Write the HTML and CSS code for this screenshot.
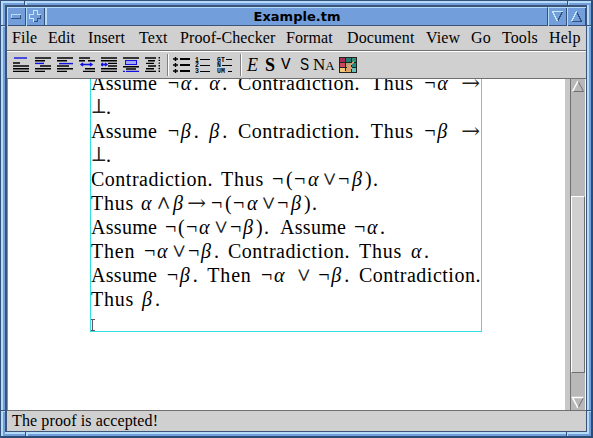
FILE: index.html
```html
<!DOCTYPE html>
<html lang="en">
<head>
<meta charset="utf-8">
<title>Example.tm</title>
<link rel="stylesheet" href="styles.css">
</head>
<body>
<div class="window">
  <header class="titlebar">
    <svg class="wbtn" viewBox="0 0 19 19"><path class="hi" d="M0 19V0H19V1H1V19z"/><path class="lo" d="M18 1H19V19H1V18H18z"/><path class="hi" d="M4 11V7H14V8H5V11z"/><path class="lo" d="M14 8V12H4V11H13V8z"/></svg>
    <svg class="wbtn" viewBox="0 0 19 19"><path class="hi" d="M0 19V0H19V1H1V19z"/><path class="lo" d="M18 1H19V19H1V18H18z"/><path class="dk" d="M7.5 14.5H11.5V11.5H14.5V7.5H11.5V3.5"/><path class="lt" d="M7.5 14.5V11.5H3.5V7.5H7.5V3.5H11.5V7.5H14.5"/></svg>
    <h1 class="title">Example.tm</h1>
    <svg class="wbtn" viewBox="0 0 19 19"><path class="hi" d="M0 19V0H19V1H1V19z"/><path class="lo" d="M18 1H19V19H1V18H18z"/><path class="dk" d="M14.5 4.5L9.5 14.5"/><path class="lt" d="M9.5 14.5L4.5 4.5H14.5"/></svg>
    <svg class="wbtn" viewBox="0 0 19 19"><path class="hi" d="M0 19V0H19V1H1V19z"/><path class="lo" d="M18 1H19V19H1V18H18z"/><path class="dk" d="M9.5 4.5L14.5 14.5H4.5"/><path class="lt" d="M4.5 14.5L9.5 4.5"/></svg>
  </header>
  <nav class="menu">
    <span>File</span><span>Edit</span><span>Insert</span><span>Text</span><span>Proof-Checker</span><span>Format</span><span>Document</span><span>View</span><span>Go</span><span>Tools</span><span>Help</span>
  </nav>
  <div class="toolbar">
    <svg class="ico" viewBox="0 0 16 16"><path class="b" d="M1 1H14"/><path class="k" d="M0 6H7M0 9H16M0 11.7H16M0 14.4H16"/></svg>
    <svg class="ico" viewBox="0 0 16 16"><path class="b" d="M0 6.4H9"/><path class="k" d="M0 1H16M0 3.7H10M5 9H16M0 11.7H16M0 14.4H10"/></svg>
    <svg class="ico" viewBox="0 0 16 16"><path class="b" d="M2 6.6H16"/><path class="k" d="M0 1H16M0 3.7H10M0 9H12M0 11.7H16M0 14.4H10"/></svg>
    <svg class="ico" viewBox="0 0 16 16"><path class="b" d="M2 7.5H13M4 6L2 7.5L4 9M11 6L13 7.5L11 9"/><path class="k" d="M0 1H11M0 3.7H6M9 3.7H16M6 11.7H16M4 14.4H16"/></svg>
    <svg class="ico" viewBox="0 0 16 16"><path class="b" d="M0 7.5H6M2 6L0 7.5L2 9M4 6L6 7.5L4 9"/><path class="k" d="M0 1H16M0 3.7H16M7 6.4H16M7 9H16M0 11.7H16M0 14.4H16"/></svg>
    <svg class="ico" viewBox="0 0 16 16"><rect class="box" x="2.5" y="3.5" width="11" height="4"/><path class="b" d="M0 14.4H2M3 14.4H16"/><path class="k" d="M0 1H16M0 9.7H16M3 12H13"/></svg>
    <svg class="ico" viewBox="0 0 16 16"><path class="k" d="M0 1H11M3 3.7H10M1 6.4H9M3 9H11M1 11.7H9M0 14.4H11"/><path class="dots" d="M14.3 0V16"/></svg>
    <i class="sep"></i>
    <svg class="ico list" viewBox="0 0 17 16"><path class="k" d="M0 2H5M2.5 0V4M0 8H5M2.5 6V10M0 14H5M2.5 12V16"/><path class="w" d="M7 2H17M7 8H17M7 14H17"/></svg>
    <svg class="ico nums" viewBox="0 0 17 16"><path class="t" d="M5 2.5H15M5 8.5H15M5 14.5H15"/><text x="0" y="4.5">1</text><text x="0" y="10">2</text><text x="0" y="15.5">3</text></svg>
    <svg class="ico desc" viewBox="0 0 17 16"><path class="t" d="M9 2.5H15M5 8.5H15M11 14.5H15"/><text x="0" y="4.5">GT</text><text x="0" y="10">N</text><text x="0" y="15.5">UM</text></svg>
    <i class="sep sep2"></i>
    <span class="f em">E</span><span class="f st">S</span><span class="f vb">V</span><span class="f sf">S</span><span class="f na">N<small>A</small></span>
    <svg class="pal" viewBox="0 0 18 16"><path fill="#222" d="M0 0H18V16H0z"/><path fill="#a52c50" d="M1 1H6V5H1z"/><path fill="#217d73" d="M7 1H12V5H7z"/><path fill="#348d75" d="M13 1H17V5H13z"/><path fill="#c9485b" d="M1 6H6V10H1z"/><path fill="#a7a77c" d="M7 6H12V10H7z"/><path fill="#218a82" d="M13 6H17V10H13z"/><path fill="#f0c878" d="M1 11H6V15H1z"/><path fill="#e2b450" d="M7 11H12V15H7z"/><path fill="#69bfc0" d="M13 11H17V15H13z"/><path fill="#dc9e70" d="M14 4L15 5L12 8L13 11L10 14L6 15L8 11L7 9L10 8z"/></svg>
  </div>
  <div class="work">
    <main class="page">
      <div class="doc">
        <p class="full"><span class="as">Assume</span><span class="m"><i class="n">¬</i><i class="g">α</i><b>.</b></span><span class="m"><i class="g">α</i><b>.</b></span><span class="co">Contradiction.</span><span class="th">Thus</span><span class="m"><i class="n">¬</i><i class="g">α</i></span><i class="ar">→</i></p>
        <p><i class="bot">⊥</i><b>.</b></p>
        <p class="full"><span class="as">Assume</span><span class="m"><i class="n">¬</i><i class="g">β</i><b>.</b></span><span class="m"><i class="g">β</i><b>.</b></span><span class="co">Contradiction.</span><span class="th">Thus</span><span class="m"><i class="n">¬</i><i class="g">β</i></span><i class="ar">→</i></p>
        <p><i class="bot">⊥</i><b>.</b></p>
        <p class="l5"><span class="co">Contradiction.</span><span class="th">Thus</span><span class="m"><i class="n">¬</i><u>(</u><i class="n">¬</i><i class="g">α</i><i class="op">∨</i><i class="n">¬</i><i class="g">β</i><u>)</u><b>.</b></span></p>
        <p class="l6"><span class="th">Thus</span><span class="m"><i class="g">α</i><i class="op loose">∧</i><i class="g wide">β</i><i class="ar mid">→</i><i class="n">¬</i><u>(</u><i class="n">¬</i><i class="g">α</i><i class="op">∨</i><i class="n">¬</i><i class="g">β</i><u>)</u><b>.</b></span></p>
        <p class="l7"><span class="as">Assume</span><span class="m"><i class="n">¬</i><u>(</u><i class="n">¬</i><i class="g">α</i><i class="op">∨</i><i class="n">¬</i><i class="g">β</i><u>)</u><b>.</b></span><span class="as gap">Assume</span><span class="m"><i class="n">¬</i><i class="g">α</i><b>.</b></span></p>
        <p class="l8"><span class="te">Then</span><span class="m"><i class="n">¬</i><i class="g">α</i><i class="op">∨</i><i class="n">¬</i><i class="g">β</i><b>.</b></span><span class="co">Contradiction.</span><span class="th">Thus</span><span class="m"><i class="g">α</i><b>.</b></span></p>
        <p class="full"><span class="as">Assume</span><span class="m"><i class="n">¬</i><i class="g">β</i><b>.</b></span><span class="te">Then</span><span class="m"><i class="n">¬</i><i class="g">α</i></span><i class="op tight">∨</i><span class="m"><i class="n">¬</i><i class="g">β</i><b>.</b></span><span class="co">Contradiction.</span></p>
        <p class="l10"><span class="th">Thus</span><span class="m"><i class="g">β</i><b>.</b></span></p>
        <svg class="caret" viewBox="0 0 4 12"><path d="M0 .5H4M0 11.5H4M1.5 0V12"/></svg>
      </div>
    </main>
    <div class="gutter"></div>
    <aside class="scroll">
      <svg class="arrow" viewBox="0 0 14 16"><path class="sd" d="M7 2L12.5 12.5H1.5"/><path class="sl" d="M1.5 12.5L7 2"/></svg>
      <div class="thumb"></div>
      <svg class="arrow" viewBox="0 0 14 16"><path class="sd" d="M12.5 3.5L7 14"/><path class="sl" d="M7 14L1.5 3.5H12.5"/></svg>
    </aside>
  </div>
  <footer class="status"><span>The proof is accepted!</span></footer>
  <svg class="frame" viewBox="0 0 593 438">
    <path class="lo" d="M24 1H25V5H24zM567 1H568V5H567zM1 25H5V26H1zM587 25H591V26H587zM1 410H5V411H1zM587 410H591V411H587zM25 432H26V436H25zM566 432H567V436H566z"/>
    <path class="hi" d="M25 1H27V5H25zM568 1H569V5H568zM1 26H5V27H1zM587 26H591V27H587zM1 411H5V412H1zM587 411H591V412H587zM26 432H28V436H26zM567 432H568V436H567z"/>
  </svg>
</div>
</body>
</html>
```
FILE: styles.css
```css
* { box-sizing: border-box; }
body { margin: 0; font-family: "Liberation Serif", serif; color: #000; }
svg { display: block; flex: none; shape-rendering: crispEdges; }
i, b, u { font-style: normal; font-weight: normal; text-decoration: none; }

.window {
  position: relative;
  width: 593px;
  height: 438px;
  padding: 7px;
  display: flex;
  flex-direction: column;
  background: #d0d0d0;
  box-shadow:
    inset 1px 1px #35527c, inset -2px -2px #2c4c78,
    inset 3px 3px #b4dcf8, inset -4px -4px #729fdc,
    inset 5px 5px #729fdc, inset -6px -6px #b4dcf8,
    inset 7px 7px #3c5478, inset -7px -7px #3c5478;
}
.frame { position: absolute; inset: 0; width: 593px; height: 438px; }
.hi { fill: #b4dcf8; }
.lo { fill: #36507a; }
.lt { fill: none; stroke: #c4e8ff; }
.dk { fill: none; stroke: #36507a; }

.titlebar {
  flex: none;
  height: 19px;
  display: flex;
  background: #729fdc;
  border-bottom: 1px solid #3c5478;
}
.wbtn { width: 19px; height: 19px; }
.title {
  flex: 1;
  height: 18px;
  margin: 0;
  border-top: 1px solid #b4dcf8;
  border-left: 2px solid #b4dcf8;
  border-right: 1px solid #36507a;
  font: bold 13px/17px "DejaVu Sans", sans-serif;
  text-align: center;
}

.menu {
  flex: none;
  height: 25px;
  padding-left: 5px;
  display: grid;
  grid-template-columns: 36px 40px 51px 41px 106px 61px 79px 45px 31px 47px auto;
  border-bottom: 1px solid #707070;
  font-size: 16px;
  line-height: 24px;
  letter-spacing: .1px;
  white-space: nowrap;
}

.toolbar {
  flex: none;
  height: 28px;
  padding-left: 6px;
  display: flex;
  align-items: center;
  border-top: 1px solid #fff;
  border-bottom: 1px solid #707070;
}
.ico { width: 16px; height: 16px; margin-right: 6px; shape-rendering: auto; }
.ico.list, .ico.nums, .ico.desc { width: 17px; margin-right: 5px; }
.ico path { fill: none; stroke-width: 1.4; }
.ico .k { stroke: #000; }
.ico .b { stroke: #1010e0; }
.ico .w { stroke: #000; stroke-width: 2; }
.ico .t { stroke: #000; stroke-width: 1; }
.ico .dots { stroke: #000; stroke-dasharray: 1.4 1.3; }
.box { fill: #a0a8f0; stroke: #1010e0; }
.ico text { font: bold 6.5px "Liberation Mono", monospace; letter-spacing: .2px; }
.sep { width: 2px; height: 22px; margin-right: 4px; background: linear-gradient(90deg, #808080 50%, #fff 50%); }
.sep2 { margin: 0 5px 0 1px; }
.f { line-height: 20px; height: 20px; white-space: nowrap; }
.em { width: 18px; font-size: 18px; font-style: italic; }
.st { width: 16px; font-size: 18px; font-weight: bold; }
.vb { width: 18px; font: 16px/20px "Liberation Mono", monospace; }
.sf { width: 14px; font: 16px/20px "Liberation Sans", sans-serif; transform: scaleX(.85); }
.na { width: 26px; font-size: 17px; }
.na small { font-size: 13px; }
.pal { width: 18px; height: 16px; }

.work { flex: 1; min-height: 0; display: flex; }
.page { width: 558px; border-left: 1px solid #909090; background: #fff; overflow: hidden; }
.doc {
  width: 392px;
  height: 253px;
  margin-left: 82px;
  border: 1px solid #30e0e4;
  border-top: 0;
}
.doc p {
  width: 390px;
  height: 24px;
  margin: 0;
  display: flex;
  font-size: 20px;
  line-height: 24px;
  white-space: nowrap;
  position: relative;
  top: -8px;
}
.doc .full { justify-content: space-between; }
.doc span, .doc i, .doc b, .doc u { flex: none; }
.as { width: 66px; letter-spacing: .3px; }
.th { width: 43px; letter-spacing: .8px; }
.te { width: 44px; letter-spacing: .8px; }
.co { width: 122px; letter-spacing: .5px; }
.m { display: flex; }
.op, .ar, .bot { font-family: "DejaVu Math TeX Gyre", "Liberation Serif", serif; line-height: 24px; height: 24px; color: #222; }
.n { width: 13px; }
.l5 .n, .l6 .n { width: 14px; }
.g { width: 13px; font-style: italic; }
.op { width: 18px; text-align: center; font-size: 18px; }
.l5 .op, .l6 .op { width: 17px; }
.l6 .loose { width: 19px; }
.tight { width: 12px; }
.ar { width: 20px; }
.mid { width: 24px; }
.wide { width: 14px; }
.bot { width: 15px; }
.doc u { width: 8px; }
.doc b { width: 5px; }
.l5 { gap: 8px; }
.l6 { gap: 7px; }
.l7 { gap: 8px; }
.l7 .gap { margin-left: 3px; }
.l8 { gap: 9px; }
.l10 { gap: 8px; }
.caret { width: 4px; height: 12px; }
.caret path { fill: none; stroke: #705060; }

.gutter { width: 5px; background: #c8c8c8; }
.scroll {
  width: 16px;
  display: flex;
  flex-direction: column;
  justify-content: space-between;
  border-left: 1px solid #707070;
  border-right: 1px solid #f4f4f4;
  background: #b8b8b8;
}
.arrow { width: 14px; height: 16px; shape-rendering: auto; }
.thumb {
  height: 177px;
  margin-top: 80px;
  border: 1px solid;
  border-color: #fff #707070 #707070 #fff;
  background: #d0d0d0;
}
.sd { fill: none; stroke: #707070; }
.sl { fill: none; stroke: #fff; stroke-width: 1.5; }

.status {
  flex: none;
  height: 21px;
  padding-left: 5px;
  border-top: 1px solid #707070;
  font-size: 16px;
  line-height: 20px;
  letter-spacing: .12px;
}
```
